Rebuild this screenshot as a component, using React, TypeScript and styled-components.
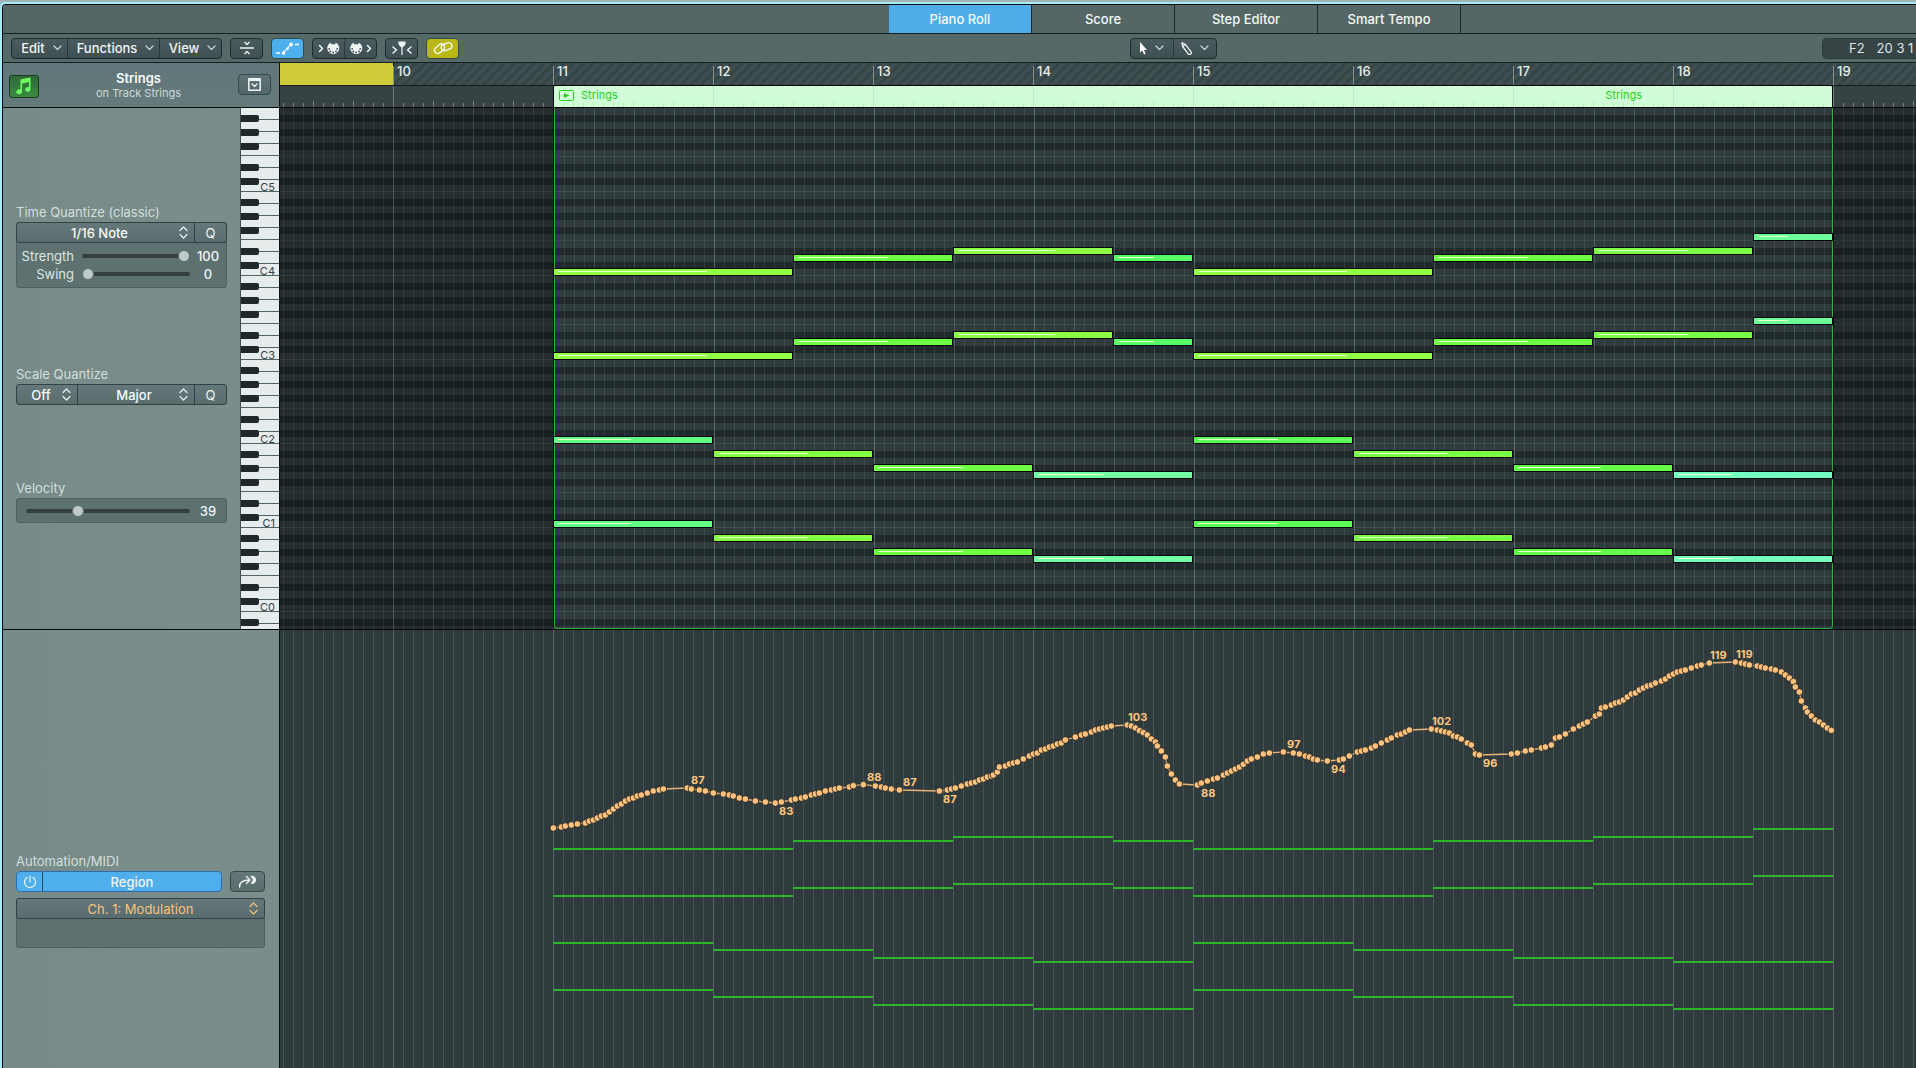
import React from "react";
import styled, { createGlobalStyle, css } from "styled-components";

/* ---------- timeline geometry ---------- */

const BAR = 160;
const ROW = 7;
const FIRST_BAR_X = 113;
const REGION_X = FIRST_BAR_X + BAR;
const REGION_BARS = 8;
const REGION_W = BAR * REGION_BARS;

type Note = { bar: number; len: number; pitch: number; vel: number; color: string };

/* pitch counts semitones upwards from C0 */
const MELODY: [number, number, number, number, string][] = [
  [0, 1.5, 0, 82, "#92ff46"],
  [1.5, 1, 2, 76, "#6eff46"],
  [2.5, 1, 3, 82, "#8cff46"],
  [3.5, 0.5, 2, 66, "#58fd63"],
  [4, 1.5, 0, 82, "#92ff46"],
  [5.5, 1, 2, 76, "#6eff46"],
  [6.5, 1, 3, 76, "#78ff46"],
  [7.5, 0.5, 5, 54, "#6cff99"],
];

const BASS: [number, number, number, number, string][] = [
  [0, 1, 0, 62, "#62ff86"],
  [1, 1, -2, 76, "#84ff46"],
  [2, 1, -4, 72, "#6eff46"],
  [3, 1, -5, 56, "#72ffa6"],
  [4, 1, 0, 68, "#5cff58"],
  [5, 1, -2, 76, "#78ff46"],
  [6, 1, -4, 70, "#64ff48"],
  [7, 1, -5, 46, "#74ffc0"],
];

const voice = (part: typeof MELODY, root: number): Note[] =>
  part.map(([bar, len, step, vel, color]) => ({ bar, len, pitch: root + step, vel, color }));

const NOTES: Note[] = [
  ...voice(MELODY, 48),
  ...voice(MELODY, 36),
  ...voice(BASS, 24),
  ...voice(BASS, 12),
];

/* top row of the grid is B5 */
const rowOf = (pitch: number) => 71 - pitch;

/* ---------- automation data, three ticks per pixel ---------- */

const TICKS = 3;
const PHRASES: { x: number; y: number; points: number[][] }[] = [
  {
    x: -39,
    y: 30,
    points: [
      [40, 564], [64, 561], [76, 558], [94, 555], [112, 552], [136, 549], [148, 543], [160, 540], [172, 534],
      [184, 528], [196, 525], [208, 516], [220, 507], [232, 498], [244, 492], [256, 483], [268, 477], [280, 474],
      [292, 468], [304, 465], [322, 459], [340, 453], [358, 450], [370, 447], [442, 444], [454, 447], [478, 450],
      [496, 453], [520, 459], [550, 462], [568, 465], [580, 468], [598, 474], [616, 477], [646, 483], [676, 486],
      [706, 489], [724, 486], [754, 480], [766, 477], [784, 474], [796, 471], [814, 465], [826, 462], [838, 459],
      [856, 453], [874, 450], [886, 447], [898, 444], [928, 441], [940, 437], [970, 434], [1006, 438], [1024, 441],
      [1036, 444], [1054, 447], [1078, 450], [1198, 453],
    ],
  },
  {
    x: 1161,
    y: 30,
    points: [
      [22, 450], [34, 447], [46, 444], [64, 438], [82, 432], [94, 429], [106, 426], [118, 420], [130, 417],
      [142, 411], [154, 408], [160, 405], [172, 396], [178, 381], [196, 378], [208, 372], [220, 369], [232, 366],
      [250, 357], [268, 348], [280, 342], [292, 339], [304, 330], [316, 327], [328, 321], [340, 318], [352, 312],
      [364, 309], [376, 300], [406, 291], [424, 285], [436, 282], [454, 276], [466, 270], [478, 267], [490, 264],
      [502, 261], [514, 258], [562, 255], [574, 258], [586, 264], [598, 272], [610, 278], [622, 285], [634, 297],
      [646, 306], [652, 318], [664, 333], [676, 351], [682, 378], [694, 402], [706, 420], [718, 432], [772, 435],
      [784, 429], [802, 423], [820, 417], [832, 414], [850, 405], [862, 399], [874, 393], [886, 387], [898, 381],
      [910, 373], [922, 363], [934, 357], [952, 351], [970, 342], [988, 339], [1030, 336], [1060, 339],
      [1078, 342], [1096, 348], [1108, 351], [1120, 357], [1132, 360], [1162, 363], [1198, 360], [1210, 357],
      [1228, 348], [1252, 336], [1264, 333], [1276, 330], [1294, 324], [1306, 318], [1324, 309], [1342, 300],
      [1354, 294], [1372, 285], [1384, 282], [1396, 276], [1408, 270],
    ],
  },
  {
    x: 2541,
    y: -90,
    points: [
      [94, 387], [112, 390], [124, 393], [136, 396], [148, 399], [160, 408], [172, 411], [184, 417], [202, 429],
      [214, 435], [226, 462], [238, 465], [334, 462], [352, 459], [376, 453], [394, 450], [424, 444], [436, 441],
      [454, 435], [466, 414], [478, 411], [496, 402], [520, 387], [538, 378], [550, 372], [562, 366], [586, 348],
      [598, 342], [604, 324], [616, 321], [634, 315], [646, 309], [658, 306], [670, 300], [682, 291], [694, 282],
      [706, 279], [718, 270], [730, 264], [742, 258], [754, 255], [766, 249], [784, 243], [796, 237], [808, 228],
      [820, 222], [832, 216], [844, 213], [856, 210], [874, 204], [892, 198], [904, 195], [928, 189], [1006, 186],
      [1024, 189], [1036, 192], [1048, 195], [1072, 198], [1084, 201], [1096, 204], [1114, 207], [1126, 210],
      [1144, 216], [1156, 225], [1168, 234], [1180, 245], [1186, 261], [1198, 276], [1204, 303], [1216, 324],
      [1222, 336], [1234, 348], [1246, 360], [1258, 366], [1270, 375], [1282, 384], [1294, 391],
    ],
  },
];

const CURVE = PHRASES.flatMap((p) => p.points.map(([x, y]) => [(x + p.x) / TICKS, (y + p.y) / TICKS]));

const VALUES: [number, number, number][] = [
  [87, 138, 154], [83, 226, 185], [88, 314, 151], [87, 350, 156], [87, 390, 173], [103, 575, 91], [88, 648, 167],
  [97, 734, 118], [94, 778, 143], [102, 879, 95], [96, 930, 137], [119, 1157, 29], [119, 1183, 28],
];

/* ---------- styles ---------- */

const Global = createGlobalStyle`
  *, *::before, *::after { box-sizing: border-box; }
  body { margin: 0; background: #a3b4b2; }
  button, select, input { font: inherit; color: inherit; margin: 0; }
`;

const Desktop = styled.div`
  height: 100vh;
  padding-top: 2px;
  overflow: hidden;
  font-family: Inter, "Liberation Sans", sans-serif;
  font-size: 13px;
  line-height: 16px;
  color: #eff5f4;
`;

const Frame = styled.main`
  height: 100%;
  display: flex;
  flex-direction: column;
  border: solid #a4ecfb;
  border-width: 2px 0 0 2px;
  border-radius: 5px 0 0 0;
  background: #a4ecfb;
`;

const Editor = styled.div`
  flex: 1;
  min-height: 0;
  display: flex;
  flex-direction: column;
  border: solid #060a0b;
  border-width: 1px 0 0 1px;
  border-radius: 4px 0 0 0;
  overflow: hidden;
`;

const TabBar = styled.nav`
  flex: none;
  display: flex;
  height: 29px;
  background: #546766;
  border-bottom: 1px solid #161f20;
`;

const Spacer = styled.div<{ $grow: number }>`
  flex: ${(p) => p.$grow} 1 0;
`;

const Tab = styled.button<{ $active?: boolean }>`
  width: 143px;
  padding: 0;
  border: 0;
  border-right: 1px solid #1c2728;
  background: ${(p) => (p.$active ? "#4fadea" : "transparent")};
  color: #f4f9f8;
  font-size: 13px;
  font-weight: 500;
`;

const Toolbar = styled.div`
  flex: none;
  display: flex;
  align-items: center;
  height: 29px;
  padding-left: 8px;
  gap: 8px;
  background: #556968;
  border-bottom: 1px solid #161f20;
`;

const raised = css`
  border: 1px solid #1f2a2c;
  border-radius: 4px;
  background: linear-gradient(#4a5b5d, #405052);
`;

const Cluster = styled.div`
  ${raised}
  display: flex;
  height: 21px;
  overflow: hidden;
`;

const ToolButton = styled.button<{ $w: number; $menu?: boolean }>`
  display: flex;
  align-items: center;
  justify-content: center;
  gap: 8px;
  width: ${(p) => p.$w}px;
  padding: 0 0 0 ${(p) => (p.$menu ? 4 : 0)}px;
  border: 0;
  background: transparent;
  font-weight: 500;
  & + & {
    border-left: 1px solid #2b393b;
  }
`;

const SoloButton = styled.button<{ $fill?: string; $w?: number }>`
  ${raised}
  flex: none;
  display: flex;
  align-items: center;
  justify-content: center;
  width: ${(p) => p.$w ?? 33}px;
  height: 21px;
  padding: 0;
  ${(p) => p.$fill && `background: ${p.$fill}; border-color: #35484c;`}
`;

const Readout = styled.output`
  display: flex;
  align-items: center;
  gap: 12px;
  width: 94px;
  height: 21px;
  padding-left: 26px;
  border: 1px solid #2c393b;
  border-right: 0;
  border-radius: 5px 0 0 5px;
  background: #374446;
  color: #dde6e6;
  white-space: nowrap;
`;

const HeaderRow = styled.div`
  flex: none;
  display: flex;
  height: 45px;
  border-bottom: 1px solid #050809;
`;

const RegionHeader = styled.header`
  flex: none;
  display: flex;
  align-items: center;
  justify-content: space-between;
  width: 277px;
  padding: 0 8px 2px 6px;
  background: linear-gradient(#61767a, #657a7b);
  border-right: 1px solid #0c1213;
`;

const RegionIcon = styled.div`
  display: grid;
  place-items: center;
  width: 30px;
  height: 23px;
  margin-top: 4px;
  border: 1px solid #173c1f;
  border-radius: 3px;
  background: linear-gradient(#2f6a36, #3a8a41);
`;

const Titles = styled.div`
  padding-top: 2px;
  text-align: center;
`;

const Title = styled.h1`
  margin: 0;
  font-size: 13px;
  line-height: 15px;
  font-weight: 600;
  color: #f6faf9;
`;

const Subtitle = styled.div`
  font-size: 11px;
  line-height: 14px;
  color: #cddad8;
`;

const Ruler = styled.div`
  flex: 1;
  min-width: 0;
  position: relative;
  display: flex;
  flex-direction: column;
  overflow: hidden;
`;

const BarStrip = styled.div`
  position: relative;
  height: 23px;
  border-bottom: 1px solid #141c1e;
  background: repeating-linear-gradient(135deg, #35444600 0 3px, #354446 4px 6px, #35444600 7px), #3f4f50;
`;

const Cycle = styled.div`
  width: 114px;
  height: 22px;
  background: #d0cb3b;
  border-right: 1px solid #050809;
`;

const BarMark = styled.span`
  position: absolute;
  top: 3px;
  bottom: 0;
  padding-left: 3px;
  border-left: 1px solid #7f8f90;
  font-size: 13px;
  line-height: 10px;
  font-weight: 500;
  color: #e6eeee;
`;

const ticks = (minor: string, bar: string, shift: number) => css`
  background-image: linear-gradient(to right, ${bar} 1px, transparent 1px),
    linear-gradient(to right, ${minor} 1px, transparent 1px),
    linear-gradient(to right, ${minor} 1px, transparent 1px);
  background-size: 160px 100%, 40px 6px, 10px 4px;
  background-position: ${shift}px 0, ${shift}px 100%, ${shift}px 100%;
  background-repeat: repeat-x;
`;

const TickStrip = styled.div`
  flex: 1;
  position: relative;
  background-color: #364244;
  ${ticks("#748385", "#6f7f80", FIRST_BAR_X)}
`;

const RegionStrip = styled.div`
  position: absolute;
  top: -1px;
  bottom: 0;
  display: flex;
  justify-content: space-between;
  align-items: center;
  padding: 0 190px 3px 5px;
  border: solid #050809;
  border-width: 1px 1px 0 1px;
  border-radius: 2px 2px 0 0;
  background-color: #d0fdd8;
  ${ticks("#b0efba", "#b4f0be", -1)}
  background-clip: padding-box;
  color: #2bd01f;
  font-size: 11px;
`;

const RegionName = styled.span`
  display: flex;
  align-items: center;
  gap: 7px;
`;

const Upper = styled.section`
  flex: 522 1 0;
  min-height: 0;
  display: flex;
  border-bottom: 1px solid #050809;
`;

const Lower = styled.section`
  flex: 438 1 0;
  min-height: 0;
  display: flex;
`;

const Side = styled.aside<{ $wide?: boolean }>`
  flex: none;
  width: ${(p) => (p.$wide ? 277 : 238)}px;
  padding: ${(p) => (p.$wide ? "223px 14px 0 13px" : "96px 13px 0 13px")};
  border-right: 1px solid ${(p) => (p.$wide ? "#0c1213" : "#3e4f51")};
  background: linear-gradient(90deg, #788b89, #7a8d8a);
  overflow: hidden;
`;

const Group = styled.div<{ $after?: number }>`
  margin-bottom: ${(p) => p.$after ?? 0}px;
`;

const Caption = styled.label`
  display: block;
  margin-bottom: 2px;
  font-size: 13px;
  line-height: 16px;
  color: #d3dfdc;
`;

const Panel = styled.div`
  border: 1px solid #4d6061;
  border-radius: 3px;
  background: #5e7171;
`;

const Choices = styled.div<{ $flush?: boolean }>`
  display: flex;
  height: 21px;
  margin: ${(p) => (p.$flush ? "-1px -1px 0" : "0")};
  border: 1px solid #324143;
  border-radius: 3px;
  background: linear-gradient(#64787a, #596c6d);
  overflow: hidden;
`;

const Picker = styled.div<{ $w?: number }>`
  position: relative;
  display: flex;
  ${(p) => (p.$w ? `width: ${p.$w}px;` : "flex: 1;")}
  min-width: 0;
  & + & {
    border-left: 1px solid #324143;
  }
`;

const Select = styled.select<{ $amber?: boolean; $right?: number }>`
  appearance: none;
  width: 100%;
  height: 19px;
  padding: 0 ${(p) => p.$right ?? 22}px 0 10px;
  border: 0;
  background: transparent;
  color: ${(p) => (p.$amber ? "#fbc078" : "#f6faf9")};
  font-size: 13px;
  font-weight: ${(p) => (p.$amber ? 400 : 500)};
  text-align: center;
  text-align-last: center;
`;

const Chevrons = styled.span`
  position: absolute;
  right: 6px;
  top: 3px;
  display: flex;
  pointer-events: none;
`;

const QButton = styled.button`
  width: 32px;
  padding: 0;
  border: 0;
  border-left: 1px solid #324143;
  background: transparent;
  font-size: 13px;
`;

const SliderRow = styled.div<{ $labelled?: boolean }>`
  display: grid;
  grid-template-columns: ${(p) => (p.$labelled ? "65px 1fr 36px" : "1fr 36px")};
  align-items: center;
  height: ${(p) => (p.$labelled ? 18 : 23)}px;
  padding-left: ${(p) => (p.$labelled ? 0 : 9)}px;
  & > label {
    padding-right: 8px;
    text-align: right;
    color: #dbe6e3;
  }
  & > output {
    text-align: center;
    font-weight: 500;
  }
`;

const SliderBlock = styled.div`
  padding: 4px 0;
`;

const Slider = styled.input`
  appearance: none;
  display: block;
  width: 100%;
  min-width: 0;
  height: 12px;
  background: transparent;
  &::-webkit-slider-runnable-track {
    height: 4px;
    border-radius: 2px;
    background: #33403f;
  }
  &::-webkit-slider-thumb {
    appearance: none;
    width: 12px;
    height: 12px;
    margin-top: -4px;
    border: 1px solid #5d6f6e;
    border-radius: 50%;
    background: #becbc9;
  }
`;

const Keyboard = styled.div`
  flex: none;
  display: grid;
  width: 39px;
  overflow: hidden;
  border-right: 1px solid #0c1213;
  background: #e6ecec;
`;

const Keys = styled.div`
  grid-area: 1 / 1;
  height: 0;
`;

const WhiteKey = styled.div`
  height: 12px;
  padding-right: 4px;
  border-bottom: 1px solid #506365;
  text-align: right;
  font-size: 11px;
  line-height: 14px;
  color: #344244;
`;

const BlackKey = styled.div<{ $on: boolean }>`
  width: 18px;
  height: ${ROW}px;
  border-radius: 0 2px 2px 0;
  background: ${(p) => (p.$on ? "#20282b" : "transparent")};
`;

const Canvas = styled.div`
  flex: 1;
  min-width: 0;
  position: relative;
  overflow: hidden;
`;

const lanes = (light: string, dark: string, line: string, strong: string, faint: string, shift: number) => css`
  background-color: ${light};
  background-image: linear-gradient(to right, ${strong} 1px, transparent 1px),
    linear-gradient(to right, ${line} 1px, transparent 1px),
    linear-gradient(to right, ${line} 1px, transparent 1px),
    linear-gradient(
      transparent 0 48px,
      ${faint} 48px 49px,
      transparent 49px 83px,
      ${line} 83px 84px
    ),
    linear-gradient(
      transparent 0 7px,
      ${dark} 7px 14px,
      transparent 14px 21px,
      ${dark} 21px 28px,
      transparent 28px 35px,
      ${dark} 35px 42px,
      transparent 42px 56px,
      ${dark} 56px 63px,
      transparent 63px 70px,
      ${dark} 70px 77px,
      transparent 77px 84px
    );
  background-size: 160px 100%, 40px 100%, 10px 100%, 100% 84px, 100% 84px;
  background-position: ${shift}px 0, ${shift}px 0, ${shift}px 0, 0 0, 0 0;
`;

const PianoGrid = styled(Canvas)`
  ${lanes("#232d30", "#171f22", "#ffffff12", "#ffffff14", "#ffffff0a", FIRST_BAR_X)}
`;

const RegionArea = styled.div`
  position: absolute;
  top: 0;
  bottom: 0;
  border: solid #2fae35;
  border-width: 0 1px 1px 1px;
  border-radius: 0 0 3px 3px;
  box-shadow: -1px 0 0 #050809, 1px 0 0 #050809;
  ${lanes("#303b3e", "#20292c", "#b8d8d41e", "#b8d8d420", "#b8d8d414", -1)}
`;

const NoteBlock = styled.div`
  position: absolute;
  height: 8px;
  padding: 2px 0 0 4px;
  border: 1px solid #050809;
`;

const Velocity = styled.div`
  height: 1px;
  background: #e8ffcf;
`;

const AutomationLane = styled(Canvas)`
  background-color: #2f3a3d;
  background-image: linear-gradient(to right, #b8d8d41c 1px, transparent 1px),
    linear-gradient(to right, #b8d8d40c 1px, transparent 1px),
    linear-gradient(to right, #b8d8d428 1px, transparent 1px);
  background-size: 160px 100%, 40px 100%, 10px 100%;
  background-position: ${FIRST_BAR_X}px 0;
`;

const GhostNote = styled.div`
  position: absolute;
  height: 2px;
  background: #2fb32b;
`;

const Curve = styled.svg`
  position: absolute;
  top: 0;
  height: 220px;
  overflow: visible;
  text {
    font-size: 11px;
    font-weight: 700;
    fill: #fdc57f;
  }
`;

const ModeRow = styled.div`
  display: flex;
  justify-content: space-between;
  margin-bottom: 6px;
`;

const ModeSwitch = styled.div`
  display: flex;
  width: 206px;
  height: 21px;
  border: 1px solid #2b6fae;
  border-radius: 4px;
  background: #4eafec;
  overflow: hidden;
`;

const PowerButton = styled.button`
  display: grid;
  place-items: center;
  width: 26px;
  padding: 0;
  border: 0;
  border-right: 1px solid #2c4a5e;
  background: transparent;
`;

const ModeButton = styled.button`
  flex: 1;
  padding: 0;
  border: 0;
  background: transparent;
  font-weight: 500;
`;

const Filler = styled.div`
  height: 28px;
`;

/* ---------- icons ---------- */

const stroke = { fill: "none", stroke: "currentColor", strokeLinecap: "round", strokeLinejoin: "round" } as const;

const Down = () => (
  <svg width="9" height="6" viewBox="0 0 9 6" {...stroke} stroke="#c6d2d2" strokeWidth="1.3">
    <path d="M1 1l3.5 3.5L8 1" />
  </svg>
);

const UpDown = ({ color = "#e9f1f0" }: { color?: string }) => (
  <svg width="9" height="13" viewBox="0 0 9 13" {...stroke} stroke={color} strokeWidth="1.2">
    <path d="M1 4.5L4.5 1 8 4.5M1 8.5L4.5 12 8 8.5" />
  </svg>
);

const CollapseIcon = () => (
  <svg width="16" height="14" viewBox="0 0 16 14" {...stroke} strokeWidth="1.4">
    <path d="M1 7h14M5.5 1L8 3.5 10.5 1M5.5 13L8 10.5 10.5 13" strokeLinecap="butt" />
  </svg>
);

const AutomationIcon = () => (
  <svg width="23" height="13" viewBox="0 0 23 13" stroke="#fff" strokeWidth="1.5" fill="#fff">
    <path d="M0 11h4M19 2.5h4M7 11l8-8.5" strokeDasharray="4 1" fill="none" />
    <circle cx="7.5" cy="11" r="1.8" stroke="none" />
    <circle cx="15" cy="2.5" r="2" stroke="none" />
    <circle cx="11.5" cy="7" r="1.2" stroke="none" />
  </svg>
);

const Din = ({ x }: { x: number }) => (
  <g transform={`translate(${x} 0)`}>
    <path fill="currentColor" stroke="none" d="M4 .6A6 6 0 1 0 8.5.6V2.300H4z" />
    <g fill="#3b4a4c" stroke="none">
      <circle cx="2.2" cy="6.8" r=".9" />
      <circle cx="3.3" cy="9.5" r=".9" />
      <circle cx="6.2" cy="10.5" r=".9" />
      <circle cx="9.1" cy="9.5" r=".9" />
      <circle cx="10.2" cy="6.8" r=".9" />
    </g>
  </g>
);

const MidiInIcon = () => (
  <svg width="22" height="13" viewBox="0 0 22 13" {...stroke} strokeWidth="1.6">
    <path d="M1.5 3.5l3 3-3 3" />
    <Din x={9} />
  </svg>
);

const MidiOutIcon = () => (
  <svg width="22" height="13" viewBox="0 0 22 13" {...stroke} strokeWidth="1.6">
    <Din x={0} />
    <path d="M17.5 3.5l3 3-3 3" />
  </svg>
);

const CatchIcon = () => (
  <svg width="20" height="14" viewBox="0 0 20 14" {...stroke} strokeWidth="1.5">
    <path d="M1 6l3.5 3L1 12M19 6l-3.5 3 3.5 3" />
    <path d="M6.5.5h7v3L10.6 6.5V14H9.4V6.5L6.5 3.5z" fill="currentColor" stroke="none" />
  </svg>
);

const LinkIcon = () => (
  <svg width="20" height="14" viewBox="0 0 20 14" {...stroke} strokeWidth="1.4">
    <rect x="1" y="4.5" width="11" height="6.5" rx="3.2" transform="rotate(-40 6.5 7.7)" />
    <rect x="8" y="2.5" width="11" height="6.5" rx="3.2" transform="rotate(-20 13.5 5.7)" />
  </svg>
);

const PointerIcon = () => (
  <svg width="8" height="13" viewBox="0 0 8 13" fill="#fff">
    <path d="M1 0v10.5l2.300-2L5 12.600l1.600-.7L5 8h3z" />
  </svg>
);

const PencilIcon = () => (
  <svg width="11" height="13" viewBox="0 0 11 13" {...stroke} strokeWidth="1.3">
    <path d="M1 .8l.6 3.700 5.600 7.300a1.700 1.700 0 0 0 2.700-2.100L4.300 2.400zM1.600 4.500L4.300 2.400" />
  </svg>
);

const NotesIcon = () => (
  <svg width="18" height="18" viewBox="0 0 18 18" fill="#6dff62">
    <path d="M5.500 2.500L15.500.5V12.500a2.600 2.300 0 1 1-1.500-2.200V5L7 6.400V15a2.800 2.300 0 1 1-1.500-2.300z" />
  </svg>
);

const DisclosureIcon = () => (
  <svg width="13" height="13" viewBox="0 0 13 13" {...stroke} strokeWidth="1.3">
    <path d="M.8.8h11.400v11.400H.8zM.8 2.200h11.400" strokeWidth="1.5" />
    <path d="M4 6l2.500 2.500L9 6" />
  </svg>
);

const PlayBox = () => (
  <svg width="15" height="11" viewBox="0 0 15 11">
    <rect x=".5" y=".5" width="14" height="10" rx="1" fill="none" stroke="#2bd01f" />
    <path d="M5 3l5.500 2.500L5 8z" fill="#2bd01f" />
  </svg>
);

const PowerIcon = () => (
  <svg width="14" height="14" viewBox="0 0 14 14" {...stroke} strokeWidth="1.2">
    <path d="M7 1v6M4 2.500a5.500 5.500 0 1 0 6 0" />
  </svg>
);

const SendIcon = () => (
  <svg width="20" height="13" viewBox="0 0 20 13" {...stroke} strokeWidth="1.4">
    <path d="M1.500 12C1.500 7.500 4.500 5 11.500 5M8.500 1.500L12 5 8.500 8.500" />
    <path d="M12.500 1.200A4 4 0 1 1 12.500 8.500L15 5z" fill="currentColor" stroke="none" />
  </svg>
);

/* ---------- parts ---------- */

const range = (n: number) => Array.from({ length: n }, (_, i) => i);
const BLACK_ROWS = new Set([1, 3, 5, 8, 10]);

const Ghost = ({ note }: { note: Note }) => (
  <GhostNote
    style={{
      left: REGION_X + note.bar * BAR,
      width: note.len * BAR,
      top: 218 + Math.floor(((48 - note.pitch) * 47) / 12),
    }}
  />
);

export default function App() {
  return (
    <Desktop>
      <Global />
      <Frame>
        <Editor>
          <TabBar>
            <Spacer $grow={886} />
            <Tab $active>Piano Roll</Tab>
            <Tab>Score</Tab>
            <Tab>Step Editor</Tab>
            <Tab>Smart Tempo</Tab>
            <Spacer $grow={455} />
          </TabBar>

          <Toolbar>
            <Cluster>
              <ToolButton $menu $w={55}>Edit <Down /></ToolButton>
              <ToolButton $menu $w={92}>Functions <Down /></ToolButton>
              <ToolButton $menu $w={62}>View <Down /></ToolButton>
            </Cluster>
            <SoloButton aria-label="Collapse mode"><CollapseIcon /></SoloButton>
            <SoloButton aria-label="Show automation" $fill="#4eafee"><AutomationIcon /></SoloButton>
            <Cluster>
              <ToolButton $w={31} aria-label="MIDI in"><MidiInIcon /></ToolButton>
              <ToolButton $w={32} aria-label="MIDI out"><MidiOutIcon /></ToolButton>
            </Cluster>
            <SoloButton aria-label="Catch playhead"><CatchIcon /></SoloButton>
            <SoloButton aria-label="Link" $fill="#b9b812"><LinkIcon /></SoloButton>
            <Spacer $grow={654} />
            <Cluster>
              <ToolButton $w={42} aria-label="Pointer tool"><PointerIcon /><Down /></ToolButton>
              <ToolButton $w={43} aria-label="Pencil tool"><PencilIcon /><Down /></ToolButton>
            </Cluster>
            <Spacer $grow={589} />
            <Readout><span>F2</span><span>20 3 1</span></Readout>
          </Toolbar>

          <HeaderRow>
            <RegionHeader>
              <RegionIcon><NotesIcon /></RegionIcon>
              <Titles>
                <Title>Strings</Title>
                <Subtitle>on Track Strings</Subtitle>
              </Titles>
              <SoloButton aria-label="Region inspector" $fill="linear-gradient(#5f7376, #536668)">
                <DisclosureIcon />
              </SoloButton>
            </RegionHeader>
            <Ruler>
              <BarStrip>
                <Cycle />
                {range(10).map((i) => (
                  <BarMark key={i} style={{ left: FIRST_BAR_X + i * BAR }}>{10 + i}</BarMark>
                ))}
              </BarStrip>
              <TickStrip>
                <RegionStrip style={{ left: REGION_X, width: REGION_W }}>
                  <RegionName><PlayBox />Strings</RegionName>
                  <RegionName>Strings</RegionName>
                </RegionStrip>
              </TickStrip>
            </Ruler>
          </HeaderRow>

          <Upper>
            <Side>
              <Group $after={78}>
                <Caption htmlFor="time-q">Time Quantize (classic)</Caption>
                <Panel>
                  <Choices $flush>
                    <Picker>
                      <Select id="time-q"><option>1/16 Note</option></Select>
                      <Chevrons><UpDown /></Chevrons>
                    </Picker>
                    <QButton>Q</QButton>
                  </Choices>
                  <SliderBlock>
                    <SliderRow $labelled>
                      <label htmlFor="strength">Strength</label>
                      <Slider id="strength" type="range" min={0} max={100} defaultValue={100} />
                      <output>100</output>
                    </SliderRow>
                    <SliderRow $labelled>
                      <label htmlFor="swing">Swing</label>
                      <Slider id="swing" type="range" min={0} max={100} defaultValue={0} />
                      <output>0</output>
                    </SliderRow>
                  </SliderBlock>
                </Panel>
              </Group>

              <Group $after={75}>
                <Caption htmlFor="scale">Scale Quantize</Caption>
                <Choices>
                  <Picker $w={60}>
                    <Select aria-label="Scale root"><option>Off</option></Select>
                    <Chevrons><UpDown /></Chevrons>
                  </Picker>
                  <Picker>
                    <Select id="scale" $right={14}><option>Major</option></Select>
                    <Chevrons><UpDown /></Chevrons>
                  </Picker>
                  <QButton>Q</QButton>
                </Choices>
              </Group>

              <Group>
                <Caption htmlFor="velocity">Velocity</Caption>
                <Panel>
                  <SliderRow>
                    <Slider id="velocity" type="range" min={1} max={127} defaultValue={39} />
                    <output>39</output>
                  </SliderRow>
                </Panel>
              </Group>
            </Side>

            <Keyboard>
              <Keys>
                {range(44).map((i) => (
                  <WhiteKey key={i}>{i % 7 === 6 ? `C${5 - Math.floor(i / 7)}` : ""}</WhiteKey>
                ))}
              </Keys>
              <Keys>
                {range(75).map((i) => (
                  <BlackKey key={i} $on={BLACK_ROWS.has(i % 12)} />
                ))}
              </Keys>
            </Keyboard>

            <PianoGrid>
              <RegionArea style={{ left: REGION_X + 1, width: REGION_W - 1 }} />
              {NOTES.map((n, i) => (
                <NoteBlock
                  key={i}
                  style={{
                    left: REGION_X + n.bar * BAR,
                    width: n.len * BAR,
                    top: rowOf(n.pitch) * ROW - 1,
                    background: n.color,
                  }}
                >
                  <Velocity style={{ width: Math.round(((n.len * BAR - 10) * n.vel) / 127) }} />
                </NoteBlock>
              ))}
            </PianoGrid>
          </Upper>

          <Lower>
            <Side $wide>
              <Caption as="div">Automation/MIDI</Caption>
              <ModeRow>
                <ModeSwitch>
                  <PowerButton aria-label="Enable automation"><PowerIcon /></PowerButton>
                  <ModeButton>Region</ModeButton>
                </ModeSwitch>
                <SoloButton $w={35} aria-label="Convert automation" $fill="linear-gradient(#64787a, #596c6d)">
                  <SendIcon />
                </SoloButton>
              </ModeRow>
              <Panel>
                <Choices $flush>
                  <Picker>
                    <Select $amber $right={10} aria-label="Automation parameter">
                      <option>Ch. 1: Modulation</option>
                    </Select>
                    <Chevrons><UpDown color="#fbc078" /></Chevrons>
                  </Picker>
                </Choices>
                <Filler />
              </Panel>
            </Side>

            <AutomationLane>
              {NOTES.map((n, i) => (
                <Ghost key={i} note={n} />
              ))}
              <Curve style={{ left: REGION_X, width: REGION_W }}>
                <polyline
                  points={CURVE.map((p) => p.join(",")).join(" ")}
                  fill="none"
                  stroke="#e8b377"
                  strokeWidth="1.3"
                />
                {CURVE.map(([x, y], i) => (
                  <circle key={i} cx={x} cy={y} r="3.3" fill="#ffc27c" stroke="#1d2426" strokeWidth=".8" />
                ))}
                {VALUES.map(([v, x, y], i) => (
                  <text key={i} x={x} y={y}>{v}</text>
                ))}
              </Curve>
            </AutomationLane>
          </Lower>
        </Editor>
      </Frame>
    </Desktop>
  );
}
